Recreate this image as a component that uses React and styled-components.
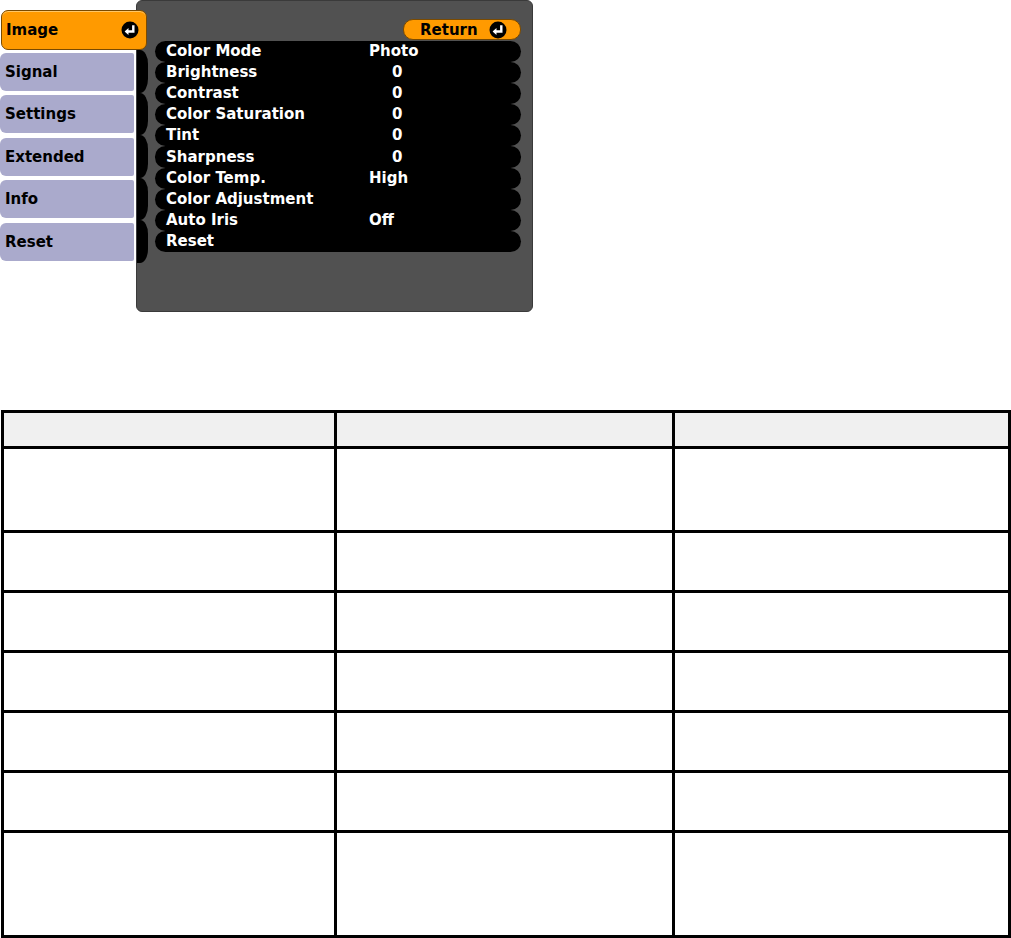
import React from "react";
import styled, { createGlobalStyle } from "styled-components";

const GlobalStyle = createGlobalStyle`
  html, body {
    margin: 0;
    padding: 0;
    background: #fff;
  }
  body {
    font-family: "DejaVu Sans", "Liberation Sans", sans-serif;
  }
  * {
    box-sizing: border-box;
  }
`;

const tabs = ["Signal", "Settings", "Extended", "Info", "Reset"];

const settings = [
  { label: "Color Mode", value: "Photo" },
  { label: "Brightness", value: "0", num: true },
  { label: "Contrast", value: "0", num: true },
  { label: "Color Saturation", value: "0", num: true },
  { label: "Tint", value: "0", num: true },
  { label: "Sharpness", value: "0", num: true },
  { label: "Color Temp.", value: "High" },
  { label: "Color Adjustment", value: "" },
  { label: "Auto Iris", value: "Off" },
  { label: "Reset", value: "" },
];

const rowHeights = [84, 60, 60, 60, 60, 60, 105];

function EnterIcon() {
  return (
    <svg width="18" height="18" viewBox="0 0 18 18">
      <circle cx="9" cy="9" r="8.5" fill="#000" />
      <path d="M12.3 4.2 V10.5 H6.5" fill="none" stroke="#fff" strokeWidth="2.4" />
      <path d="M3.6 10.5 L7.5 7 V14 Z" fill="#fff" />
    </svg>
  );
}

export default function App() {
  return (
    <>
      <GlobalStyle />
      <Osd>
        <TabColumn>
          <ActiveTab>
            <span>Image</span>
            <EnterIcon />
          </ActiveTab>
          {tabs.map((t) => (
            <Tab key={t}>{t}</Tab>
          ))}
        </TabColumn>
        <Panel>
          <Spine>
            {tabs.map((t) => (
              <SpineSeg key={t} />
            ))}
          </Spine>
          <Content>
            <ReturnButton>
              <span>Return</span>
              <EnterIcon />
            </ReturnButton>
            <Rows>
              {settings.map((s) => (
                <Row key={s.label}>
                  <Label>{s.label}</Label>
                  <Value $num={s.num}>{s.value}</Value>
                </Row>
              ))}
            </Rows>
          </Content>
        </Panel>
      </Osd>
      <Table>
        <TRow $h={36} $head>
          <Cell />
          <Cell />
          <Cell />
        </TRow>
        {rowHeights.map((h, i) => (
          <TRow key={i} $h={h}>
            <Cell />
            <Cell />
            <Cell />
          </TRow>
        ))}
      </Table>
    </>
  );
}

const Osd = styled.div`
  display: flex;
  align-items: flex-start;
  height: 312px;
`;

const TabColumn = styled.div`
  width: 136px;
  padding-top: 10px;
  display: flex;
  flex-direction: column;
`;

const ActiveTab = styled.div`
  position: relative;
  z-index: 2;
  width: 146px;
  height: 40px;
  margin-left: 1px;
  margin-bottom: 3px;
  background: #ff9a00;
  border: 1px solid #7a4a00;
  border-radius: 7px;
  box-shadow: inset 0 1px 0 #ffc766;
  display: flex;
  align-items: center;
  justify-content: space-between;
  padding: 0 7px 0 4px;
  font-weight: 700;
  font-size: 15px;
  color: #000;
`;

const Tab = styled.div`
  width: 134px;
  height: 38px;
  margin-bottom: 4.4px;
  background: #aaaacc;
  border-radius: 6px 2px 2px 6px;
  display: flex;
  align-items: center;
  padding-left: 5px;
  font-weight: 700;
  font-size: 15px;
  color: #000;
`;

const Panel = styled.div`
  width: 397px;
  height: 312px;
  background: #515151;
  border: 1px solid #3a3a3a;
  border-radius: 6px;
  display: flex;
`;

const Spine = styled.div`
  width: 11px;
  padding-top: 49px;
  display: flex;
  flex-direction: column;
`;

const SpineSeg = styled.div`
  height: 42.6px;
  background: #000;
  border-radius: 0 8px 8px 0 / 0 14px 14px 0;
`;

const Content = styled.div`
  flex: 1;
  padding: 18px 11px 0 7px;
  display: flex;
  flex-direction: column;
`;

const ReturnButton = styled.div`
  align-self: flex-end;
  width: 118px;
  height: 21px;
  margin-bottom: 1px;
  background: #ff9a00;
  border: 1px solid #7a4a00;
  border-radius: 10px;
  display: flex;
  align-items: center;
  justify-content: space-between;
  padding: 0 13px 0 16px;
  font-weight: 700;
  font-size: 15px;
  color: #000;
`;

const Rows = styled.div`
  display: flex;
  flex-direction: column;
`;

const Row = styled.div`
  height: 21.1px;
  background: #000;
  border-radius: 10.5px;
  display: flex;
  align-items: center;
  padding-left: 11px;
  color: #fff;
  font-weight: 700;
  font-size: 15px;
  line-height: 1;
`;

const Label = styled.span`
  width: 203px;
`;

const Value = styled.span`
  padding-left: ${(p) => (p.$num ? "23px" : "0")};
`;

const Table = styled.div`
  margin-top: 98px;
  margin-left: 1px;
  width: 1010px;
  border-top: 3px solid #000;
  border-left: 3px solid #000;
`;

const TRow = styled.div`
  display: grid;
  grid-template-columns: 333px 338px 336px;
  height: ${(p) => p.$h}px;
  background: ${(p) => (p.$head ? "#f0f0f0" : "#fff")};
`;

const Cell = styled.div`
  border-right: 3px solid #000;
  border-bottom: 3px solid #000;
`;
